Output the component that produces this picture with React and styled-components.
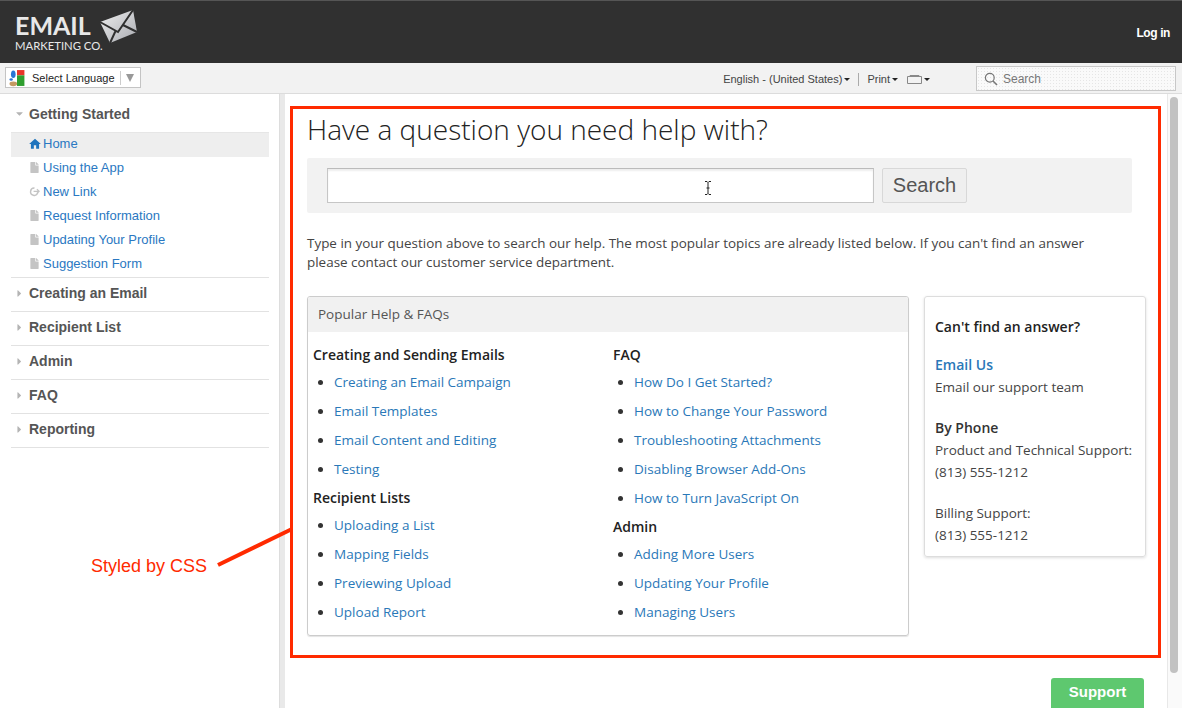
import React from "react";
import styled, { createGlobalStyle } from "styled-components";
import { FaFile, FaCaretDown, FaCaretRight } from "react-icons/fa";
import { MdHome } from "react-icons/md";

const Global = createGlobalStyle`
  html, body { margin: 0; padding: 0; background: #fff; overflow: hidden; }
  * { box-sizing: border-box; }
  a { text-decoration: none; }
`;
const Page = styled.div`
  position: relative;
  width: 1182px;
  height: 708px;
  overflow: hidden;
  font-family: "Open Sans", sans-serif;
  display: flex;
  flex-direction: column;
`;
const Header = styled.header`
  height: 63px;
  flex: none;
  background: #303030;
  border-top: 1px solid #555;
  display: flex;
  align-items: center;
  justify-content: space-between;
  padding: 0 12px 0 15px;
`;
const Logo = styled.div`
  position: relative;
  width: 124px;
  height: 44px;
  display: flex;
  flex-direction: column;
  color: #e8e8e8;
  font-family: Lato, sans-serif;
`;
const LogoBig = styled.span`
  font-size: 25px;
  font-weight: 700;
  line-height: 23px;
  margin-top: 4px;
`;
const LogoSmall = styled.span`
  font-size: 11.3px;
  line-height: 13px;
  margin-top: 2px;
`;
const LogoMark = styled.svg`
  position: absolute;
  left: 83px;
  top: -1px;
`;
const Login = styled.a`
  color: #fff;
  font: bold 12px "Liberation Sans", sans-serif;
  letter-spacing: -0.4px;
  margin-top: 1px;
`;
const Toolbar = styled.div`
  height: 31px;
  flex: none;
  background: #f2f2f2;
  border-bottom: 1px solid #dcdcdc;
  display: flex;
  align-items: center;
  padding: 0 6px 0 5px;
  font-family: "Liberation Sans", sans-serif;
  font-size: 11px;
  color: #333;
`;
const Translate = styled.div`
  width: 136px;
  height: 21px;
  background: #fff;
  border: 1px solid #c4c4c4;
  display: flex;
  align-items: center;
  padding-left: 2px;
  color: #222;
  margin-top: -1px;
`;
const TranslateLabel = styled.span`
  margin-left: 6px;
  width: 89px;
  border-right: 1px solid #ccc;
  line-height: 14px;
`;
const TranslateCaret = styled.span`
  margin-left: 5px;
  width: 0;
  height: 0;
  border-left: 4px solid transparent;
  border-right: 4px solid transparent;
  border-top: 8px solid #999;
`;
const ToolRight = styled.div`
  margin-left: auto;
  display: flex;
  align-items: center;
  color: #444;
`;
const ToolItem = styled.span`
  display: flex;
  align-items: center;
  gap: 2px;
  margin-top: 2px;
  margin-left: ${p => p.$gap || 0}px;
`;
const SmallCaret = styled.span`
  width: 0;
  height: 0;
  border-left: 3px solid transparent;
  border-right: 3px solid transparent;
  border-top: 3px solid #222;
`;
const ToolSep = styled.span`
  width: 1px;
  height: 13px;
  background: #aaa;
  margin: 2px 8px 0 8px;
`;
const SearchBox = styled.div`
  width: 200px;
  height: 25px;
  margin-left: 46px;
  margin-top: 1px;
  background: #fafafa radial-gradient(#e6e6e6 0.5px, transparent 0.6px) 0 0 / 3px 3px;
  border: 1px solid #c8c8c8;
  display: flex;
  align-items: center;
  gap: 5px;
  padding-left: 7px;
  color: #777;
  font-size: 12px;
`;
const Body = styled.div`
  flex: 1;
  display: flex;
  min-height: 0;
`;
const Sidebar = styled.aside`
  width: 279px;
  flex: none;
  padding: 4px 10px 0 11px;
  font-family: "Liberation Sans", sans-serif;
`;
const Group = styled.div`
  border-bottom: 1px solid #e2e2e2;
  padding: ${p => (p.$open ? "0" : "5px 0 8px")};
`;
const GroupTitle = styled.div`
  display: flex;
  align-items: center;
  height: ${p => (p.$open ? "35px" : "20px")};
  padding-left: 3px;
  padding-bottom: ${p => (p.$open ? "3px" : "0")};
  color: #555;
  font-size: 14px;
  font-weight: bold;
  border-bottom: ${p => (p.$open ? "1px solid #e6e6e6" : "none")};
  & > svg { width: 11px; height: 11px; color: #b4b4b4; margin-right: 4px; flex: none; }
`;
const SideItem = styled.a`
  display: flex;
  align-items: center;
  height: 24px;
  padding: 0 0 3px 18px;
  color: #2a78c2;
  font-size: 13px;
  background: ${p => (p.$active ? "#eeeeee" : "transparent")};
  & > svg { width: 11px; height: 11px; margin-right: 3px; flex: none; color: #c4c4c4; }
`;
const HomeIcon = styled(MdHome)`
  && { width: 14px; height: 14px; margin: 0 1px 0 -1px; color: #1f74bd; }
`;
const Gutter = styled.div`
  width: 6px;
  flex: none;
  background: #e9e9e9;
  border-left: 1px solid #ddd;
`;
const Content = styled.main`
  flex: 1;
  min-width: 0;
  padding: 12px 6px 0 5px;
  display: flex;
  flex-direction: column;
`;
const Frame = styled.section`
  height: 552px;
  border: 3px solid #ff2a00;
  padding: 0 12px 0 14px;
  flex: none;
`;
const Title = styled.h1`
  margin: 0;
  font-size: 28px;
  font-weight: 300;
  line-height: 40px;
  color: #222;
`;
const SearchBand = styled.div`
  width: 825px;
  height: 55px;
  margin-top: 9px;
  background: #f2f2f2;
  border-radius: 2px;
  display: flex;
  align-items: center;
  padding-left: 20px;
  gap: 8px;
`;
const BigInputWrap = styled.div`
  position: relative;
  width: 547px;
  height: 35px;
  background: #fff;
  border: 1px solid #c6c6c6;
  border-top-color: #bbb;
  box-shadow: inset 0 2px 2px #eee;
`;
const Cursor = styled.svg`
  position: absolute;
  left: 376px;
  top: 12px;
`;
const SearchBtn = styled.button`
  width: 85px;
  height: 35px;
  background: #efefef;
  border: 1px solid #d8d8d8;
  border-radius: 2px;
  color: #555;
  font: 20px "Liberation Sans", sans-serif;
  padding: 0;
`;
const Intro = styled.p`
  margin: 21px 0 0;
  width: 800px;
  font-size: 13.45px;
  line-height: 19px;
  color: #444;
`;
const Row = styled.div`
  display: flex;
  gap: 15px;
  margin-top: 24px;
  align-items: flex-start;
`;
const Panel = styled.div`
  width: 602px;
  height: 340px;
  flex: none;
  border: 1px solid #ccc;
  border-radius: 3px;
  box-shadow: 0 1px 1px #e4e4e4;
  overflow: hidden;
`;
const PanelHead = styled.div`
  height: 35px;
  background: #f1f1f1;
  padding-left: 10px;
  font-size: 13.5px;
  line-height: 35px;
  color: #555;
`;
const Columns = styled.div`
  display: grid;
  grid-template-columns: 300px 300px;
  padding: 11px 0 0 5px;
`;
const Heading = styled.h3`
  margin: 0;
  height: 24px;
  font-size: 14px;
  font-weight: 600;
  line-height: 24px;
  color: #222;
`;
const List = styled.ul`
  margin: 0 0 3px;
  padding: 0 0 0 21px;
  list-style: disc;
  color: #333;
`;
const Item = styled.li`
  height: 29px;
  font-size: 13.5px;
  line-height: 31px;
`;
const Link = styled.a`
  color: #2a78b8;
`;
const Card = styled.aside`
  width: 222px;
  height: 261px;
  flex: none;
  border: 1px solid #ddd;
  border-radius: 3px;
  box-shadow: 0 1px 3px #ddd;
  padding: 19px 10px 0;
  font-size: 13.5px;
  line-height: 22px;
  color: #444;
`;
const CardTitle = styled.div`
  font-size: 14px;
  font-weight: 600;
  color: #222;
  margin-bottom: 16px;
`;
const CardBlock = styled.div`
  margin-bottom: 19px;
`;
const CardStrong = styled.div`
  font-size: 14px;
  font-weight: 600;
  color: ${p => (p.$link ? "#2a78b8" : "#333")};
`;
const Foot = styled.div`
  display: flex;
  justify-content: flex-end;
  padding: 20px 17px 0 0;
`;
const Support = styled.a`
  width: 93px;
  height: 40px;
  flex: none;
  background: #5ec86f;
  border-radius: 3px 3px 0 0;
  color: #fff;
  font: bold 15px/28px "Liberation Sans", sans-serif;
  text-align: center;
`;
const Track = styled.div`
  width: 15px;
  flex: none;
  background: #fafafa;
  border-left: 1px solid #e8e8e8;
  padding: 3px 4px 0 2px;
`;
const Thumb = styled.div`
  height: 576px;
  background: #c2c2c2;
  border-radius: 4px;
`;
const Note = styled.div`
  position: absolute;
  left: 91px;
  top: 556px;
  font: 18px/20px "Liberation Sans", sans-serif;
  color: #ff2a00;
`;
const NoteLine = styled.svg`
  position: absolute;
  left: 215px;
  top: 525px;
`;

const LinkIcon = () => (
  <svg viewBox="0 0 12 12">
    <path d="M9.500 7.500A4 4 0 1 1 6 2.200" fill="none" stroke="currentColor" strokeWidth="1.600" />
    <path d="M5 5.800h6M8.600 3.400 11 5.800 8.600 8.200" fill="none" stroke="currentColor" strokeWidth="1.400" />
  </svg>
);

const closed = ["Creating an Email", "Recipient List", "Admin", "FAQ", "Reporting"];
const side = [
  ["Using the App", FaFile],
  ["New Link", LinkIcon],
  ["Request Information", FaFile],
  ["Updating Your Profile", FaFile],
  ["Suggestion Form", FaFile],
];
const col1 = [
  ["Creating and Sending Emails", ["Creating an Email Campaign", "Email Templates", "Email Content and Editing", "Testing"]],
  ["Recipient Lists", ["Uploading a List", "Mapping Fields", "Previewing Upload", "Upload Report"]],
];
const col2 = [
  ["FAQ", ["How Do I Get Started?", "How to Change Your Password", "Troubleshooting Attachments", "Disabling Browser Add-Ons", "How to Turn JavaScript On"]],
  ["Admin", ["Adding More Users", "Updating Your Profile", "Managing Users"]],
];

const Column = ({ data }) => (
  <div>
    {data.map(([h, items]) => (
      <React.Fragment key={h}>
        <Heading>{h}</Heading>
        <List>
          {items.map(t => (
            <Item key={t}><Link href="#">{t}</Link></Item>
          ))}
        </List>
      </React.Fragment>
    ))}
  </div>
);

export default function App() {
  return (
    <Page>
      <Global />
      <Header>
        <Logo>
          <LogoBig>EMAIL</LogoBig>
          <LogoSmall>MARKETING CO.</LogoSmall>
          <LogoMark width="40" height="36" viewBox="0 0 40 36">
            <defs>
              <linearGradient id="env" x1="0" y1="0" x2="1" y2="1">
                <stop offset="0" stopColor="#f0f0f0" />
                <stop offset="1" stopColor="#a8aab0" />
              </linearGradient>
            </defs>
            <path d="M2 13 35 1l4 22-27 11z" fill="url(#env)" />
            <path d="M2 13 20 23 35 1M12 34 18 21M39 23 25 16" fill="none" stroke="#303030" strokeWidth="2" />
          </LogoMark>
        </Logo>
        <Login href="#">Log in</Login>
      </Header>
      <Toolbar>
        <Translate>
          <svg width="18" height="18" viewBox="0 0 16 17">
            <rect x="8" y="1" width="7" height="5" fill="#e8352a" />
            <rect x="8" y="6" width="7" height="10" fill="#2f9e2f" />
            <ellipse cx="4.500" cy="5" rx="2.200" ry="3.600" fill="#2a74d4" />
            <ellipse cx="2.500" cy="10" rx="1.600" ry="1.200" fill="#2a74d4" />
            <ellipse cx="4.500" cy="14" rx="3.600" ry="2.200" fill="#c49a62" />
          </svg>
          <TranslateLabel>Select Language</TranslateLabel>
          <TranslateCaret />
        </Translate>
        <ToolRight>
          <ToolItem>English - (United States)<SmallCaret /></ToolItem>
          <ToolSep />
          <ToolItem>Print<SmallCaret /></ToolItem>
          <ToolItem $gap={9}>
            <svg width="15" height="9" viewBox="0 0 15 9">
              <path d="M.5 1.500h14v7H.5zM3 1.500V.5h9v1" fill="none" stroke="#888" />
            </svg>
            <SmallCaret />
          </ToolItem>
          <SearchBox>
            <svg width="14" height="14" viewBox="0 0 14 14">
              <circle cx="5.800" cy="5.800" r="4.400" fill="none" stroke="#777" strokeWidth="1.200" />
              <path d="m9 9 4 4" stroke="#777" strokeWidth="1.600" />
            </svg>
            Search
          </SearchBox>
        </ToolRight>
      </Toolbar>
      <Body>
        <Sidebar>
          <Group $open>
            <GroupTitle $open><FaCaretDown />Getting Started</GroupTitle>
            <SideItem $active href="#"><HomeIcon />Home</SideItem>
            {side.map(([t, Icon]) => (
              <SideItem key={t} href="#"><Icon />{t}</SideItem>
            ))}
          </Group>
          {closed.map(t => (
            <Group key={t}>
              <GroupTitle><FaCaretRight />{t}</GroupTitle>
            </Group>
          ))}
        </Sidebar>
        <Gutter />
        <Content>
          <Frame>
            <Title>Have a question you need help with?</Title>
            <SearchBand>
              <BigInputWrap>
                <Cursor width="8" height="14" viewBox="0 0 8 14">
                  <path d="M1 .5h2L4 1.500 5 .5h2M4 1.500v11M1 13.500h2l1-1 1 1h2M2.500 7h3" fill="none" stroke="#222" />
                </Cursor>
              </BigInputWrap>
              <SearchBtn>Search</SearchBtn>
            </SearchBand>
            <Intro>Type in your question above to search our help. The most popular topics are already listed below. If you can't find an answer please contact our customer service department.</Intro>
            <Row>
              <Panel>
                <PanelHead>Popular Help &amp; FAQs</PanelHead>
                <Columns>
                  <Column data={col1} />
                  <Column data={col2} />
                </Columns>
              </Panel>
              <Card>
                <CardTitle>Can't find an answer?</CardTitle>
                <CardBlock>
                  <CardStrong $link>Email Us</CardStrong>
                  Email our support team
                </CardBlock>
                <CardBlock>
                  <CardStrong>By Phone</CardStrong>
                  Product and Technical Support:<br />(813) 555-1212
                </CardBlock>
                <CardBlock>
                  Billing Support:<br />(813) 555-1212
                </CardBlock>
              </Card>
            </Row>
          </Frame>
          <Foot><Support href="#">Support</Support></Foot>
        </Content>
        <Track><Thumb /></Track>
      </Body>
      <NoteLine width="80" height="44" viewBox="0 0 80 44">
        <path d="M3 40 77 4" stroke="#ff2a00" strokeWidth="4" />
      </NoteLine>
      <Note>Styled by CSS</Note>
    </Page>
  );
}
